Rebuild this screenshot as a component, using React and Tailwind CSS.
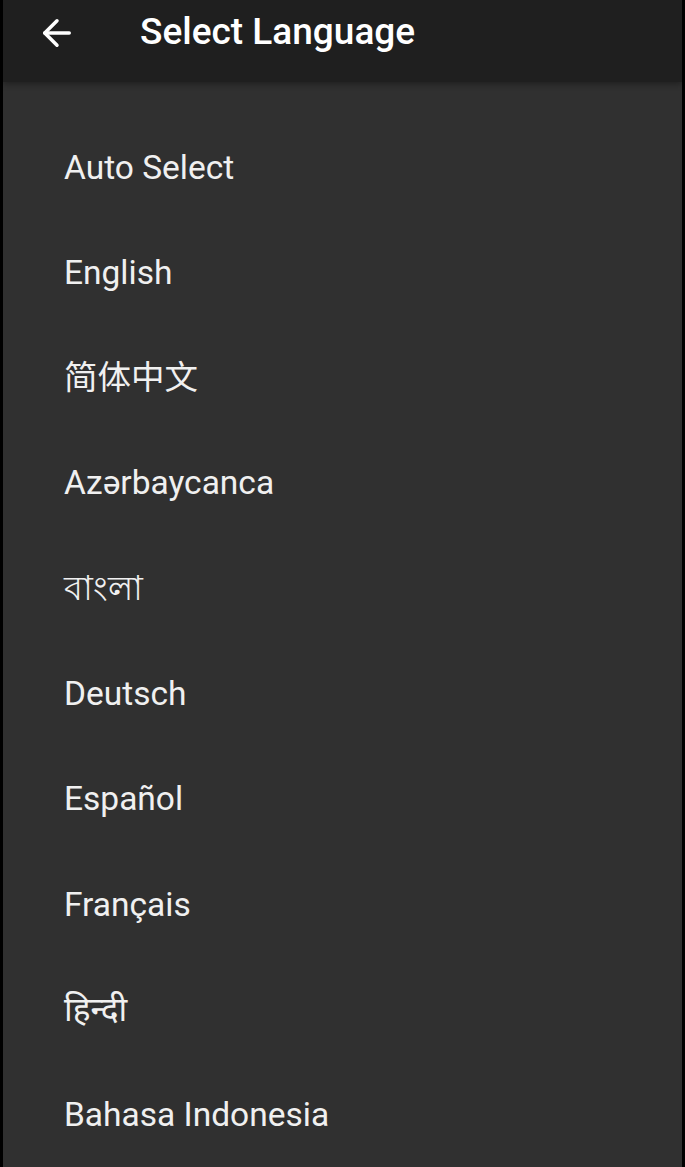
import { ArrowLeft } from 'lucide-react';

const languages = [
  'Auto Select',
  'English',
  '简体中文',
  'Azərbaycanca',
  'বাংলা',
  'Deutsch',
  'Español',
  'Français',
  'हिन्दी',
  'Bahasa Indonesia',
];

export default function App() {
  return (
    <div
      className="flex h-[1167px] w-[685px] overflow-hidden bg-black"
      style={{ fontFamily: 'Roboto, "Noto Sans", "Noto Sans CJK SC", sans-serif' }}
    >
      <div className="mx-[3px] flex flex-1 flex-col bg-[#303030]">
        <header className="flex h-[82px] shrink-0 items-start bg-[#1f1f1f] pt-[11px] shadow-[0_2px_6px_rgba(0,0,0,0.35)]">
          <button className="ml-[33px] mt-[1px] text-white">
            <ArrowLeft size={42} strokeWidth={2} />
          </button>
          <h1 className="ml-[62px] text-[37px] font-medium leading-[42px] text-white">Select Language</h1>
        </header>

        <ul className="pt-[33px]">
          {languages.map((lang) => (
            <li key={lang} className="flex h-[105.3px] items-center pl-[61px] text-[33.5px] text-[#f0f0f0]">
              {lang}
            </li>
          ))}
        </ul>
      </div>
    </div>
  );
}
